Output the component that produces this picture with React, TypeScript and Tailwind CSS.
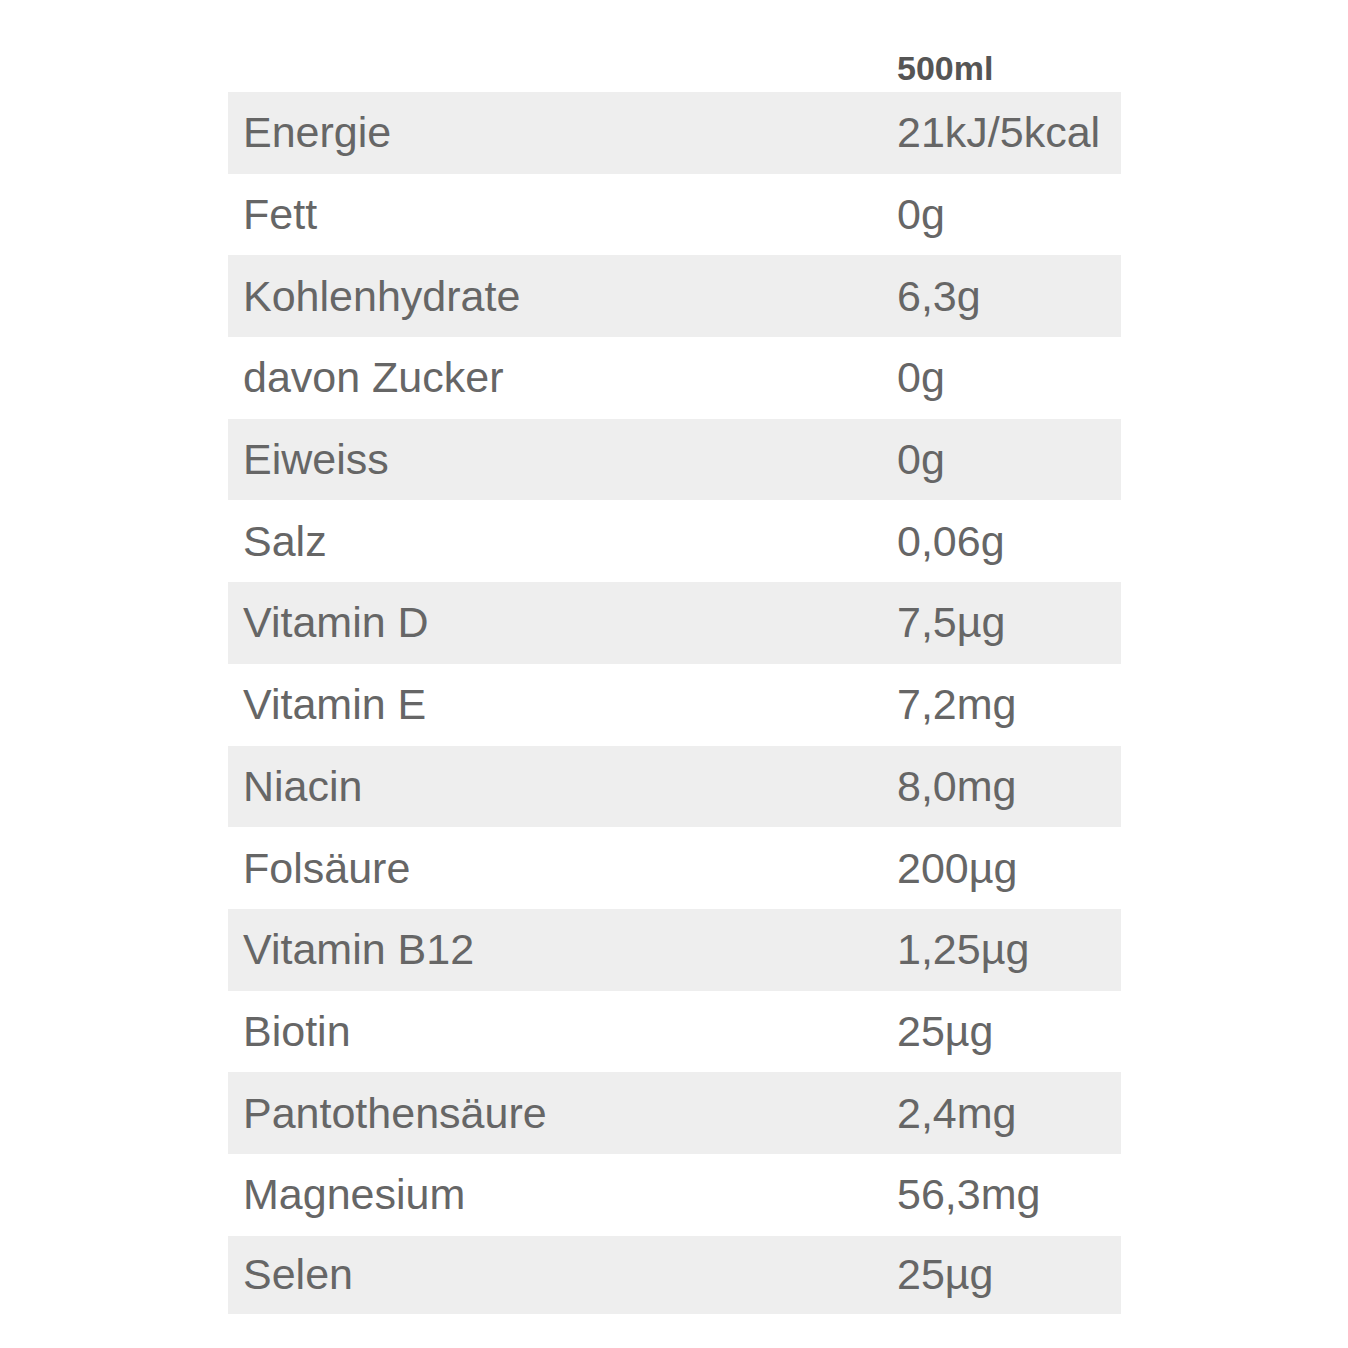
const rows: [string, string][] = [
	["Energie", "21kJ/5kcal"],
	["Fett", "0g"],
	["Kohlenhydrate", "6,3g"],
	["davon Zucker", "0g"],
	["Eiweiss", "0g"],
	["Salz", "0,06g"],
	["Vitamin D", "7,5µg"],
	["Vitamin E", "7,2mg"],
	["Niacin", "8,0mg"],
	["Folsäure", "200µg"],
	["Vitamin B12", "1,25µg"],
	["Biotin", "25µg"],
	["Pantothensäure", "2,4mg"],
	["Magnesium", "56,3mg"],
	["Selen", "25µg"],
]

export default function App() {
	return (
		<div className="min-h-[1348px] w-full bg-white pt-[51px] font-['Liberation_Sans',Arial,sans-serif] text-[#666]">
			<div className="ml-[228px] w-[893px]">
				<div className="grid h-[41px] grid-cols-[669px_1fr]">
					<div />
					<div className="text-[34px] font-bold leading-none text-[#555]">500ml</div>
				</div>
				{rows.map(([label, value], i) => (
					<div
						key={label}
						className={`grid grid-cols-[669px_1fr] items-center text-[43px] leading-none ${i % 2 === 0 ? "bg-[#eeeeee]" : "bg-white"} ${i === rows.length - 1 ? "h-[78px]" : "h-[81.7px]"}`}
					>
						<div className="pl-[15px]">{label}</div>
						<div>{value}</div>
					</div>
				))}
			</div>
		</div>
	)
}
